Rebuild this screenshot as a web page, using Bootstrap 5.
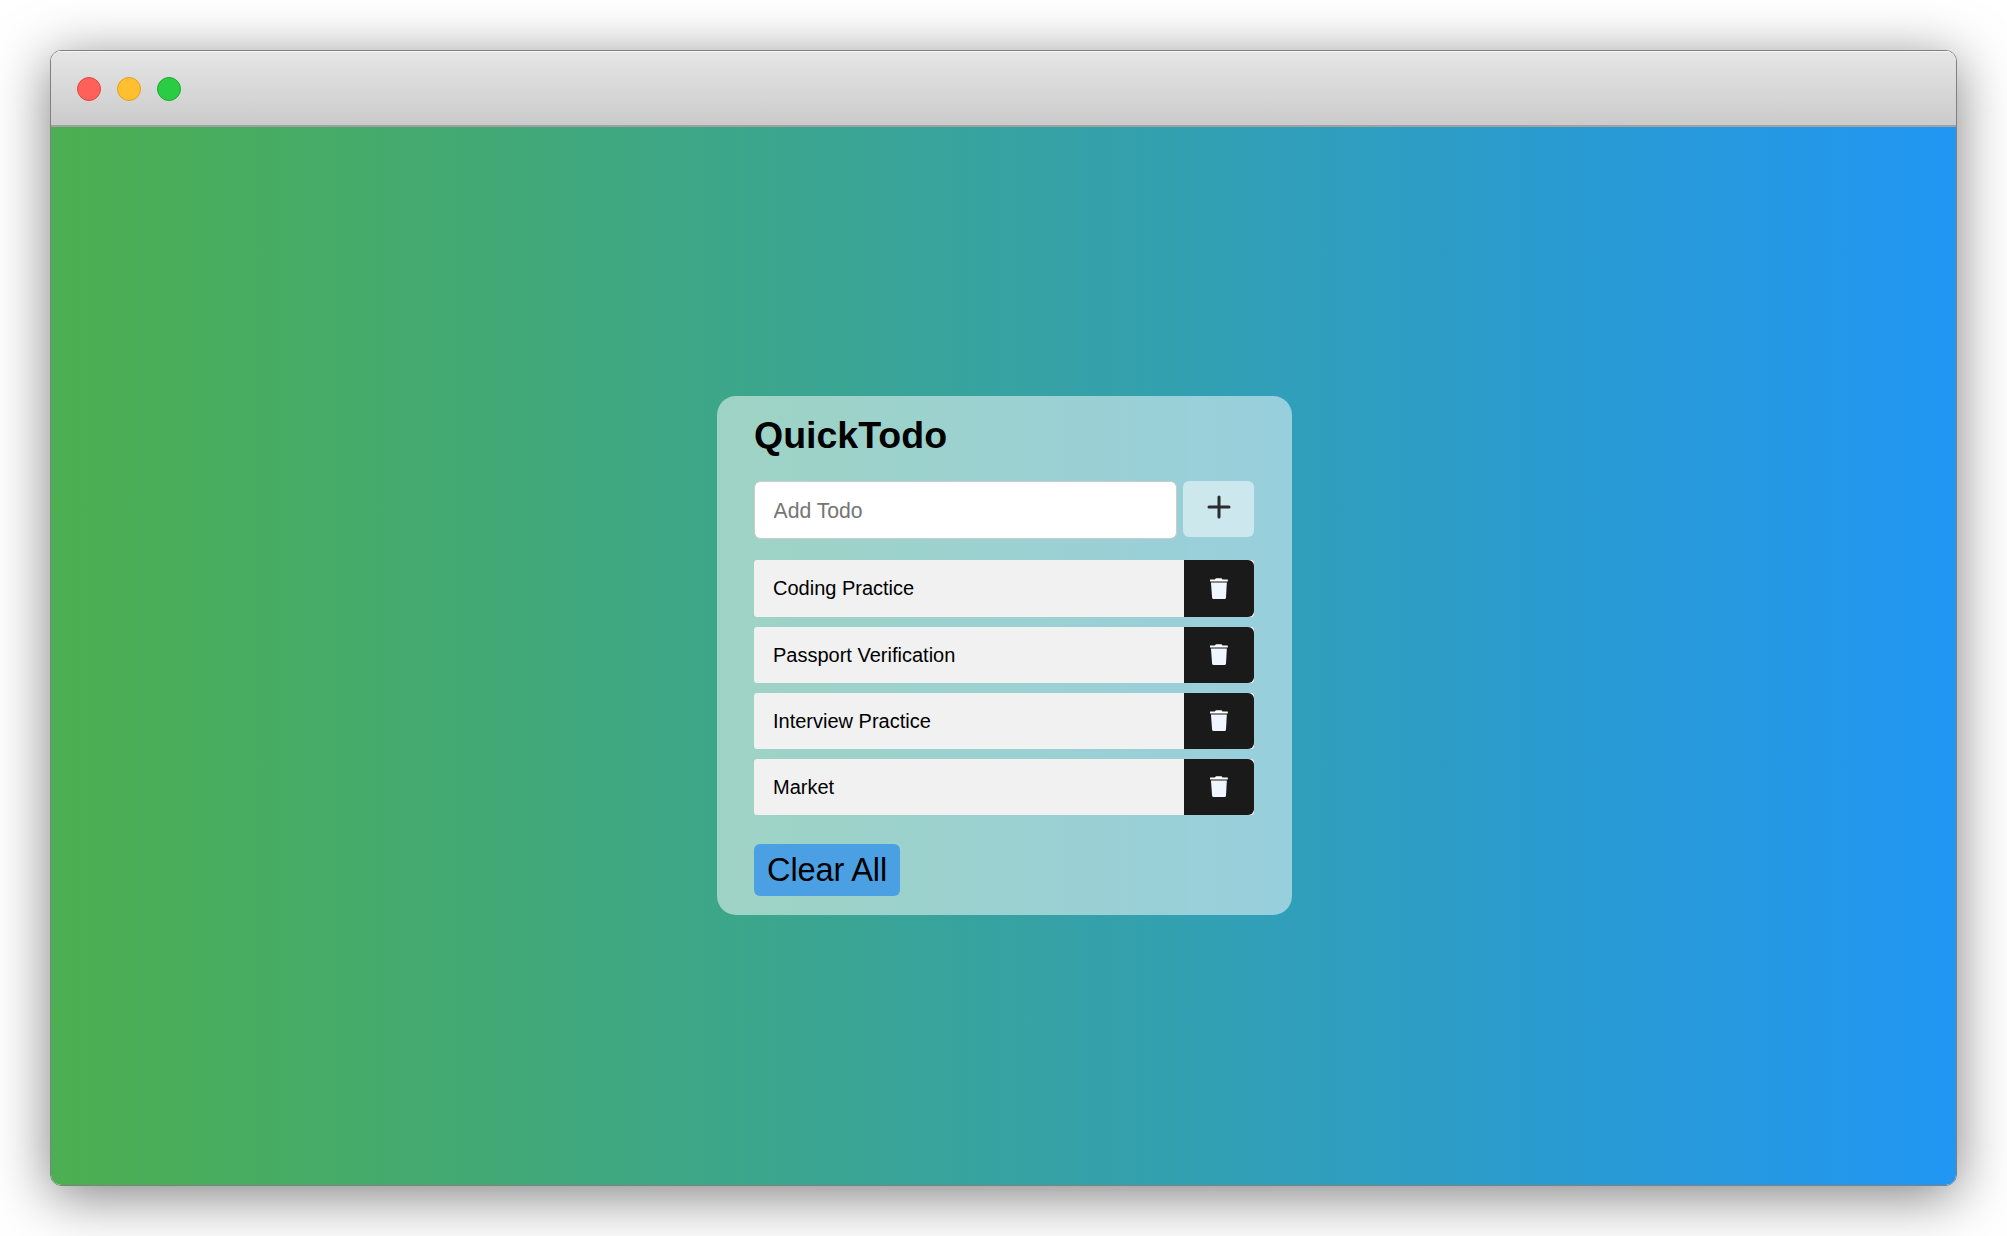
<!DOCTYPE html>
<html lang="en">
<head>
<meta charset="utf-8">
<meta name="viewport" content="width=device-width, initial-scale=1">
<title>QuickTodo</title>
<link href="https://cdn.jsdelivr.net/npm/bootstrap@5.3.0/dist/css/bootstrap.min.css" rel="stylesheet">
<style>
body{font-family:"Liberation Sans",Arial,sans-serif;color:#000;background:#fff;padding:50px 50px 50px 50px;line-height:1}
.app-window{height:1136px;border:1px solid #808080;border-radius:11px;box-shadow:0 10px 56px rgba(0,0,0,.5)}
.title-bar{height:76px;padding-left:26px;padding-top:2px;gap:16px;background:linear-gradient(#e6e6e6,#cbcbcb);border-bottom:2px solid #a1a1a1;box-shadow:inset 0 1px #f5f5f5}
.dot{width:24px;height:24px;border:1px solid}
.dot-close{background:#ff6059;border-color:#e2463f}
.dot-min{background:#ffbf2f;border-color:#dfa023}
.dot-max{background:#29cc42;border-color:#1bac2c}
.stage{background:linear-gradient(90deg,#4caf50,#2196f3);padding-top:269px}
.todo-card{width:575px;height:519px;margin-left:666px;border-radius:19px;background:rgba(255,255,255,.5);padding:17px 38px 0 37px}
.todo-title{font-size:37.5px;line-height:44px;margin-bottom:24px}
.todo-input{width:423px;height:58px;border:1px solid #ccc;border-radius:6px;padding:1px 18px 0 18.5px;font-size:21.2px;color:#000;box-shadow:none}
.todo-input::placeholder{color:#757575;opacity:1}
.btn-add{width:71px;height:56px;border-radius:6px;background:rgba(255,255,255,.5);padding:0 0 5px}
.todo-list{margin-top:21px}
.todo-item{height:56px;margin-bottom:10px;background:#f1f1f1;border-radius:3px;font-size:20px;padding-left:19px}
.todo-item:first-child{height:57px}
.todo-item:first-child span{padding-bottom:1px}
.btn-del{width:70px;border-radius:0 6px 6px 0;background:#1a1a1a}
.btn-del svg{margin-bottom:2px}
.btn-clear{width:146px;height:52px;margin-top:19px;border-radius:6px;background:#4ba0e4;font-size:32.6px;letter-spacing:-.15px;line-height:1;color:#000}
</style>
<script src="https://cdn.jsdelivr.net/npm/bootstrap@5.3.0/dist/js/bootstrap.bundle.min.js"></script>
</head>
<body>
<svg width="0" height="0" class="d-none"><symbol id="trash" viewBox="0 0 20 22">
<path d="M1 2.4H5.8L7 1.2H12.5L13.6 2.4H18.8V4.5H1Z" fill="#fff"/><path d="M2 4.5H17.8V6H2Z" fill="#85878a"/><path d="M2 6H17.8L17 20.5Q16.9 22 15.6 22H4.5Q3.3 22 3.1 20.5Z" fill="#f0f6ff"/></symbol></svg>
<main class="app-window d-flex flex-column overflow-hidden">
  <header class="title-bar d-flex align-items-center flex-shrink-0">
    <span class="dot dot-close rounded-circle"></span><span class="dot dot-min rounded-circle"></span><span class="dot dot-max rounded-circle"></span>
  </header>
  <section class="stage flex-grow-1">
    <div class="todo-card">
      <h1 class="todo-title fw-bold">QuickTodo</h1>
      <div class="d-flex justify-content-between align-items-start">
        <input class="todo-input form-control" type="text" placeholder="Add Todo">
        <button class="btn-add btn border-0 d-flex align-items-center justify-content-center" aria-label="Add"><svg width="24" height="24" viewBox="0 0 24 24" stroke="#2b2b30" stroke-width="3" stroke-linecap="round"><path d="M12 2V22M2 12H22"/></svg></button>
      </div>
      <ul class="todo-list list-unstyled mb-0">
        <li class="todo-item d-flex align-items-center justify-content-between"><span>Coding Practice</span><button class="btn-del btn border-0 p-0 h-100 d-flex align-items-center justify-content-center" aria-label="Delete"><svg width="20" height="22"><use href="#trash"/></svg></button></li>
        <li class="todo-item d-flex align-items-center justify-content-between"><span>Passport Verification</span><button class="btn-del btn border-0 p-0 h-100 d-flex align-items-center justify-content-center" aria-label="Delete"><svg width="20" height="22"><use href="#trash"/></svg></button></li>
        <li class="todo-item d-flex align-items-center justify-content-between"><span>Interview Practice</span><button class="btn-del btn border-0 p-0 h-100 d-flex align-items-center justify-content-center" aria-label="Delete"><svg width="20" height="22"><use href="#trash"/></svg></button></li>
        <li class="todo-item d-flex align-items-center justify-content-between"><span>Market</span><button class="btn-del btn border-0 p-0 h-100 d-flex align-items-center justify-content-center" aria-label="Delete"><svg width="20" height="22"><use href="#trash"/></svg></button></li>
      </ul>
      <button class="btn-clear btn border-0 p-0">Clear All</button>
    </div>
  </section>
</main>
</body>
</html>
